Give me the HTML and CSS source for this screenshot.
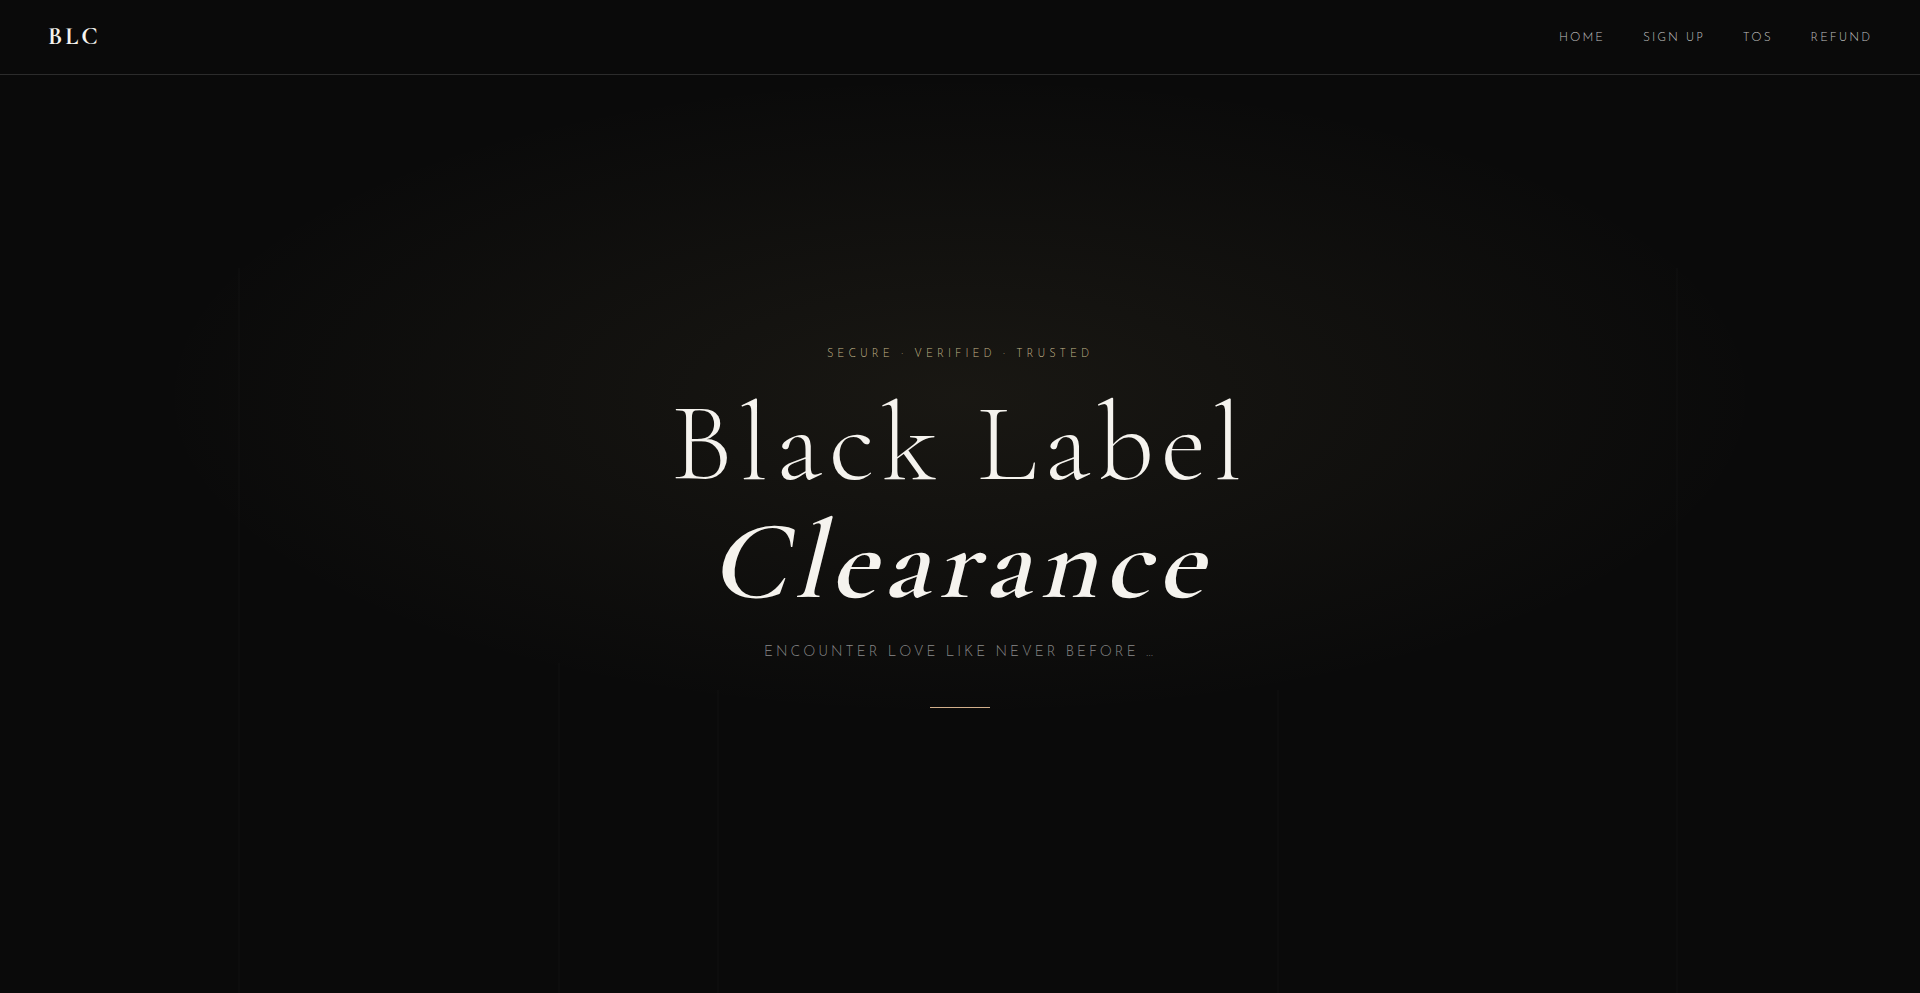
FILE: index.html
```html
<!DOCTYPE html>
<html lang="en">
<head>
  <meta charset="UTF-8">
  <meta name="viewport" content="width=device-width, initial-scale=1.0">
  <title>Black Label Clearance</title>
  <link rel="stylesheet" href="styles.css">
</head>
<body>
  <nav class="navbar">
    <a class="logo" href="#">BLC</a>
    <ul class="nav-links">
      <li><a href="#">Home</a></li>
      <li><a href="#">Sign Up</a></li>
      <li><a href="#">TOS</a></li>
      <li><a href="#">Refund</a></li>
    </ul>
  </nav>

  <main class="hero">
    <p class="eyebrow">Secure · Verified · Trusted</p>
    <h1>Black Label<br><em>Clearance</em></h1>
    <p class="tagline">Encounter love like never before …</p>
    <div class="divider"></div>
  </main>
</body>
</html>
```

FILE: styles.css
```css
:root {
  --black: #0a0a0a;
  --white: #f5f3ee;
  --gold: #d2b08c;
  --line: #0d0d0d;
  --serif: "Cormorant Garamond", "Liberation Serif", serif;
  --sans: "Josefin Sans", Lato, sans-serif;
}
* {
  margin: 0;
  padding: 0;
  box-sizing: border-box;
}
body {
  min-height: 100vh;
  display: flex;
  flex-direction: column;
  background: var(--black);
  color: var(--white);
  font-family: var(--sans);
  font-weight: 300;
}
a {
  color: inherit;
  text-decoration: none;
}

/* nav */
.navbar {
  display: flex;
  justify-content: space-between;
  align-items: center;
  padding: 24px 48px;
  border-bottom: 1px solid #2c2c2c;
}
.logo {
  font-family: var(--serif);
  font-size: 24px;
  line-height: 26px;
  font-weight: 700;
  letter-spacing: 3px;
}
.nav-links {
  display: flex;
  gap: 38px;
  padding-top: 2px;
  list-style: none;
  font-size: 12px;
  letter-spacing: 2px;
  text-transform: uppercase;
  color: #c0c0c0;
}
.nav-links a:hover {
  color: var(--gold);
}

/* hero */
.hero {
  flex: 1;
  display: flex;
  flex-direction: column;
  align-items: center;
  justify-content: center;
  padding: 0 24px 14px;
  text-align: center;
  /* glow on top, faint pinstripes behind */
  background:
    radial-gradient(ellipse 60% 50% at 50% 35%, rgba(201, 180, 124, 0.08), transparent 70%),
    linear-gradient(var(--line), var(--line)) 12.4% 100% / 2px 79% no-repeat,
    linear-gradient(var(--line), var(--line)) 29.1% 100% / 2px 36% no-repeat,
    linear-gradient(var(--line), var(--line)) 37.4% 100% / 2px 33% no-repeat,
    linear-gradient(var(--line), var(--line)) 66.6% 100% / 2px 33% no-repeat,
    linear-gradient(var(--line), var(--line)) 87.4% 100% / 2px 79% no-repeat;
}
.eyebrow {
  font-size: 11px;
  line-height: 16px;
  letter-spacing: 4px;
  text-transform: uppercase;
  color: #c4b68a;
  margin-bottom: 22px;
}
h1 {
  font-family: var(--serif);
  font-size: 112px;
  line-height: 118px;
  font-weight: 300;
  letter-spacing: 7px;
  margin-bottom: 22px;
}
/* slanted roman, not the true italic */
h1 em {
  display: inline-block;
  font-style: normal;
  font-weight: 600;
  transform: skewX(-14deg);
  transform-origin: 50% 78%;
}
.tagline {
  font-size: 14px;
  line-height: 20px;
  letter-spacing: 3px;
  text-transform: uppercase;
  color: #8a8a8a;
  margin-bottom: 44px;
}
.divider {
  width: 60px;
  height: 1px;
  background: var(--gold);
}
```
